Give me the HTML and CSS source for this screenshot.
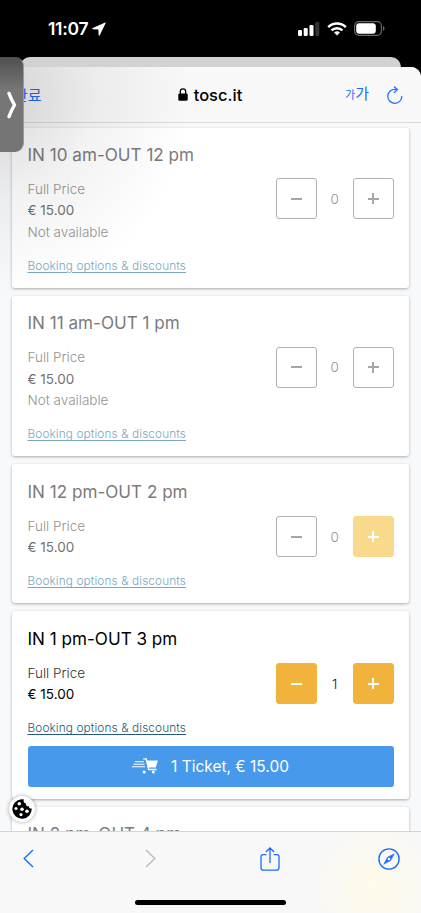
FILE: index.html
```html
<!DOCTYPE html>
<html lang="en">
<head>
    <meta charset="UTF-8">
    <meta name="viewport" content="width=device-width, initial-scale=1.0">
    <title>tosc.it</title>
    <link rel="stylesheet" href="styles.css">
</head>
<body>
    <header class="status-bar">
        <div class="clock">
            <span>11:07</span>
            <svg width="14" height="14" viewBox="0 0 14 14"><path d="M13.2.5.8 6.1c-.9.4-.7 1.1.1 1.2l5.5.3.2 5.3c0 .9.9 1 1.3.2L13.7 1.1c.2-.5 0-.8-.5-.6z" fill="#fff"/></svg>
        </div>
        <div class="status-icons">
            <svg width="22" height="14" viewBox="0 0 22 14">
                <rect x="0" y="8" width="4" height="6" rx="1.2" fill="#fff"/>
                <rect x="5.7" y="6" width="4" height="8" rx="1.2" fill="#fff"/>
                <rect x="11.5" y="3" width="4" height="11" rx="1.2" fill="#fff"/>
                <rect x="17.3" y="0" width="4" height="14" rx="1.2" fill="#343434"/>
            </svg>
            <svg width="20" height="14" viewBox="0 0 20 14" fill="none" stroke="#fff" stroke-width="2.5">
                <path d="M1.2 5.1a12.5 12.5 0 0 1 17.6 0"/>
                <path d="M4.5 8.4a7.9 7.9 0 0 1 11 0"/>
                <path d="M10 13.5 7 10.6a4.3 4.3 0 0 1 6 0z" fill="#fff" stroke="none"/>
            </svg>
            <svg width="31" height="15" viewBox="0 0 31 15">
                <rect x=".6" y=".6" width="26.8" height="13.8" rx="4.3" fill="none" stroke="#686868" stroke-width="1.2"/>
                <rect x="2.2" y="2.2" width="19.6" height="10.6" rx="3" fill="#fff"/>
                <path d="M29 5v5c2-.8 2-4.2 0-5z" fill="#686868"/>
            </svg>
        </div>
    </header>
    <div class="back-sheet"></div>

    <main class="sheet">
        <nav class="toolbar">
            <span class="done">완료</span>
            <span class="site">
                <svg width="10" height="13" viewBox="0 0 10 13"><rect x=".3" y="5.4" width="9.4" height="7.4" rx="1.4"/><path d="M2.3 6V3.6a2.7 2.7 0 0 1 5.4 0V6" fill="none" stroke="#000" stroke-width="1.3"/></svg>
                <span>tosc.it</span>
            </span>
            <span class="tools">
                <span class="text-size"><small>가</small>가</span>
                <svg width="16" height="18" viewBox="0 0 16 18" fill="none" stroke="#1a6dff" stroke-width="1.2"><path d="M8.9 3.4a7 7 0 1 0 5.9 6.5"/><path d="m6.9.5 3.6 3-3.6 3.3"/></svg>
            </span>
        </nav>

        <section class="tickets">
            <article class="card">
                <div class="slot muted">
                    <h2>IN 10 am-OUT 12 pm</h2>
                    <div class="prices">
                        <p class="label">Full Price</p>
                        <p class="price">€ 15.00</p>
                        <p class="none">Not available</p>
                    </div>
                    <a href="#">Booking options &amp; discounts</a>
                </div>
                <div class="stepper muted">
                    <button class="minus"></button><span>0</span><button class="plus"></button>
                </div>
            </article>

            <article class="card">
                <div class="slot muted">
                    <h2>IN 11 am-OUT 1 pm</h2>
                    <div class="prices">
                        <p class="label">Full Price</p>
                        <p class="price">€ 15.00</p>
                        <p class="none">Not available</p>
                    </div>
                    <a href="#">Booking options &amp; discounts</a>
                </div>
                <div class="stepper muted">
                    <button class="minus"></button><span>0</span><button class="plus"></button>
                </div>
            </article>

            <article class="card open">
                <div class="slot muted">
                    <h2>IN 12 pm-OUT 2 pm</h2>
                    <div class="prices">
                        <p class="label">Full Price</p>
                        <p class="price">€ 15.00</p>
                    </div>
                    <a href="#">Booking options &amp; discounts</a>
                </div>
                <div class="stepper muted">
                    <button class="minus"></button><span>0</span><button class="plus pale"></button>
                </div>
            </article>

            <article class="card open">
                <div class="slot">
                    <h2>IN 1 pm-OUT 3 pm</h2>
                    <div class="prices">
                        <p class="label">Full Price</p>
                        <p class="price">€ 15.00</p>
                    </div>
                    <a href="#">Booking options &amp; discounts</a>
                </div>
                <div class="stepper">
                    <button class="minus solid"></button><span>1</span><button class="plus solid"></button>
                </div>
                <button class="checkout">
                    <svg width="27" height="16" viewBox="0 0 27 16" fill="none" stroke="#fff">
                        <path d="M3 3.7h9M1.5 6.2h11M0 8.7h13" stroke-width="1.1"/>
                        <path d="M11.2.8h3l2.4 10.7h8" stroke-width="1.3"/>
                        <path d="M14.5 2.5h11.4l-2.2 7H16z" fill="#fff" stroke="none"/>
                        <circle cx="12.2" cy="14" r="1.5" fill="#fff" stroke="none"/>
                        <circle cx="21.3" cy="14" r="1.5" fill="#fff" stroke="none"/>
                    </svg>
                    <span>1 Ticket, € 15.00</span>
                </button>
            </article>

            <article class="card open">
                <div class="slot muted">
                    <h2>IN 2 pm-OUT 4 pm</h2>
                </div>
            </article>
        </section>

        <footer class="bottom-bar">
            <svg width="11" height="19" viewBox="0 0 11 19" fill="none" stroke="#1a6dff" stroke-width="1.4"><path d="M10 1 1.2 9.5 10 18"/></svg>
            <svg width="11" height="19" viewBox="0 0 11 19" fill="none" stroke="#b9b9b9" stroke-width="1.3"><path d="m1 1 8.8 8.5L1 18"/></svg>
            <svg width="20" height="24" viewBox="0 0 20 24" fill="none" stroke="#1a6dff" stroke-width="1.3"><path d="M6.4 7.6H3.2A2.2 2.2 0 0 0 1 9.8V21a2.2 2.2 0 0 0 2.2 2.2h13.6A2.2 2.2 0 0 0 19 21V9.8a2.2 2.2 0 0 0-2.2-2.2h-3.2M10 16V1.2M5.900 5 10 1l4.100 4"/></svg>
            <svg width="22" height="22" viewBox="0 0 22 22" fill="none" stroke="#1a6dff" stroke-width="1.4"><circle cx="11" cy="11" r="10.1"/><path d="M16.3 5.7 12.7 12.6 5.7 16.3 9.4 9.3z" fill="#1a6dff" stroke-width=".5"/><circle cx="11" cy="11" r="1.3" fill="#f8f8f8" stroke="none"/></svg>
        </footer>
    </main>

    <div class="shade"></div>
    <div class="drawer">
        <svg width="10" height="28" viewBox="0 0 10 28" fill="none" stroke="#fff" stroke-width="3.4" stroke-linecap="round" stroke-linejoin="round"><path d="M2 2.4 Q4.5 9 7.5 14 Q4.5 19 2 25.6"/></svg>
    </div>
    <div class="cookie">
        <svg width="20" height="20" viewBox="0 0 20 20">
            <path d="M9.5.3A9.7 9.7 0 1 0 19.7 9.4c-1.8.4-2.9-.7-2.8-2.2-2.1.4-3.3-1-2.9-2.7C11.8 4.2 11 2.2 12 .6A9 9 0 0 0 9.5.3z"/>
            <g fill="#fff"><circle cx="7.300" cy="4.8" r="1.8"/><circle cx="4" cy="9.5" r="1.6"/><circle cx="10" cy="10.2" r="1.8"/><circle cx="15" cy="12.3" r="1.8"/><circle cx="9" cy="15.6" r="1.6"/></g>
        </svg>
    </div>
    <div class="home-line"></div>
</body>
</html>
```
FILE: styles.css
```css
* {
    box-sizing: border-box;
}
body {
    margin: 0;
    height: 913px;
    overflow: hidden;
    background: #000;
    font-family: Inter, "Noto Sans CJK KR", sans-serif;
    color: #000;
    display: flex;
    flex-direction: column;
}
svg {
    display: block;
    flex-shrink: 0;
}
.status-bar {
    height: 57px;
    flex-shrink: 0;
    padding: 0 36px 0 48px;
    display: flex;
    align-items: center;
    justify-content: space-between;
    color: #fff;
}
.clock {
    display: flex;
    align-items: center;
    gap: 4px;
    font-size: 17.5px;
    font-weight: 600;
    letter-spacing: -0.3px;
}
.status-icons {
    display: flex;
    align-items: center;
    gap: 7px;
}
.back-sheet {
    height: 10px;
    flex-shrink: 0;
    margin: 0 20px;
    background: #d0d3cf;
    border-radius: 10px 10px 0 0;
}
.sheet {
    flex: 1;
    min-height: 0;
    display: flex;
    flex-direction: column;
    background: #f8f9fb;
    border-radius: 10px 10px 0 0;
    overflow: hidden;
}
.toolbar {
    height: 56px;
    flex-shrink: 0;
    display: grid;
    grid-template-columns: 1fr auto 1fr;
    align-items: center;
    padding: 0 18px 0 14px;
    background: #f8f8f8;
    border-bottom: 1px solid #d9dadb;
}
.done {
    font-size: 15px;
    color: #1a6dff;
}
.site {
    display: flex;
    align-items: center;
    gap: 6px;
    padding-left: 3px;
    font-size: 16.5px;
    font-weight: 500;
}
.tools {
    display: flex;
    align-items: center;
    justify-content: flex-end;
    gap: 18px;
    color: #1a6dff;
}
.text-size {
    font-size: 15px;
    line-height: 20px;
}
.text-size small {
    font-size: 11px;
}
.tickets {
    flex: 1;
    min-height: 0;
    overflow: hidden;
    padding: 4.5px 12px 0;
    display: flex;
    flex-direction: column;
    gap: 8px;
}
.card {
    flex-shrink: 0;
    display: grid;
    grid-template-columns: 1fr auto;
    align-items: start;
    padding: 15.5px 15.5px 12px;
    background: #fff;
    border-radius: 3px;
    box-shadow: 0 1px 3px rgba(0, 0, 0, 0.32);
}
.slot h2 {
    margin: 0 0 11.8px;
    font-size: 17.1px;
    font-weight: 400;
    line-height: 24px;
    white-space: nowrap;
}
.prices {
    margin-bottom: 12.4px;
}
.prices p {
    margin: 0;
    font-size: 13.5px;
    line-height: 21.6px;
}
.prices .label,
.prices .none {
    font-weight: 300;
}
.prices .label {
    color: #333;
}
.slot a {
    display: block;
    font-size: 11.8px;
    font-weight: 300;
    line-height: 20px;
    letter-spacing: 0.12px;
    color: #245a7b;
    text-underline-offset: 2px;
    white-space: nowrap;
}
.muted h2 {
    color: #7b7b7b;
}
.prices .none,
.muted .prices .label {
    color: #939393;
}
.muted .price {
    color: #727272;
}
.muted a {
    color: #7ba7bf;
}
.stepper {
    display: flex;
    align-items: center;
    margin-top: 35.3px;
    font-size: 13.5px;
    font-weight: 300;
    color: #222;
}
.open .stepper {
    margin-top: 36.4px;
}
.stepper.muted {
    color: #939393;
}
.stepper span {
    width: 35.5px;
    text-align: center;
}
.minus,
.plus {
    width: 41px;
    height: 41px;
    padding: 0;
    display: grid;
    place-items: center;
    border: 1px solid #b0b0b0;
    border-radius: 3px;
    background: #fff;
    color: #a6a6a6;
}
.minus::before,
.plus::before,
.plus::after {
    content: "";
    grid-area: 1 / 1;
    width: 11px;
    height: 1.6px;
    background: currentColor;
}
.plus::after {
    width: 1.6px;
    height: 11px;
}
.solid {
    background: #f2b33d;
    border-color: #f2b33d;
    color: #fff;
}
.pale {
    background: #f9d98b;
    border-color: #f9d98b;
    color: #fff;
}
.checkout {
    grid-column: 1 / -1;
    height: 41px;
    margin-top: 7.5px;
    padding: 0;
    display: flex;
    align-items: center;
    justify-content: center;
    gap: 12px;
    border: 0;
    border-radius: 3px;
    background: #4799eb;
    color: #fff;
    font: 400 15.5px Inter, sans-serif;
}
.bottom-bar {
    height: 82px;
    flex-shrink: 0;
    display: grid;
    grid-template-columns: 122px 115px 1fr auto;
    align-items: center;
    padding: 0 21px 28px 23px;
    border-top: 1px solid #d5d5d5;
    background: radial-gradient(circle at 375px 55px, #fffbe9, #f8f8f8 65px);
}
/* soft shadow thrown by the side drawer */
.shade {
    position: absolute;
    top: 67px;
    left: 0;
    width: 200px;
    height: 230px;
    background: radial-gradient(ellipse 190px 200px at 0 30px, rgba(0, 0, 0, 0.15), rgba(0, 0, 0, 0.05) 50%, transparent);
    pointer-events: none;
}
.drawer {
    position: absolute;
    top: 57px;
    left: 0;
    width: 24px;
    height: 95px;
    padding-left: 7px;
    display: flex;
    align-items: center;
    border-radius: 0 9px 9px 0;
    background: linear-gradient(#505050, #777 35%, #747474);
    border-right: 1px solid #999;
}
.cookie {
    position: absolute;
    top: 796px;
    left: 9px;
    width: 26px;
    height: 26px;
    display: grid;
    place-items: center;
    border-radius: 50%;
    background: #fff;
    box-shadow: 0 0 4px rgba(0, 0, 0, 0.35);
}
.home-line {
    position: absolute;
    left: 135px;
    top: 900px;
    width: 151px;
    height: 5px;
    border-radius: 3px;
    background: #000;
}
```
